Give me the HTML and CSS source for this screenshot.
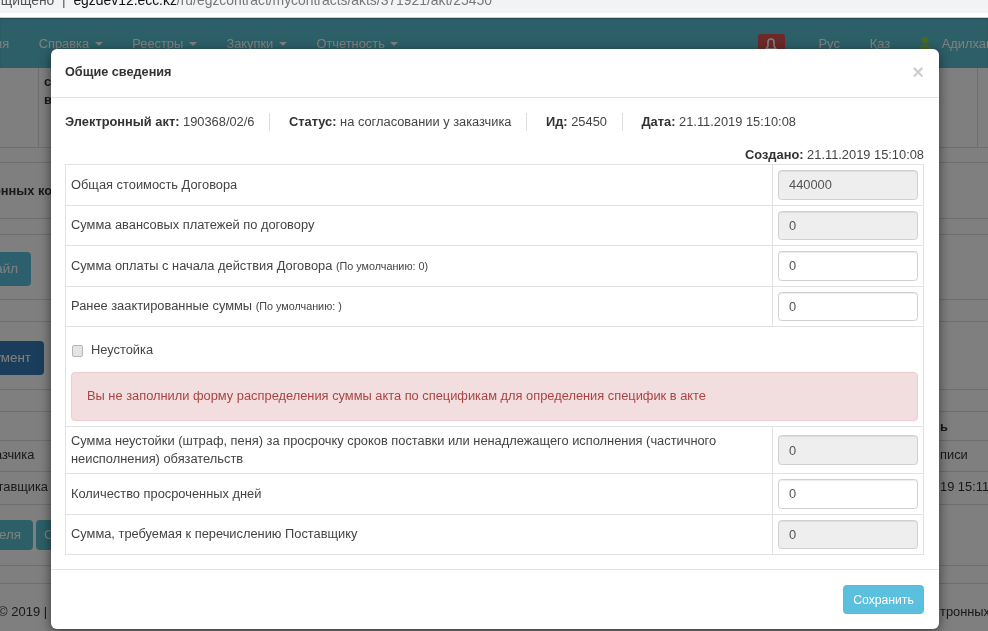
FILE: index.html
```html
<!DOCTYPE html>
<html lang="ru">
<head>
<meta charset="utf-8">
<title>Общие сведения</title>
<link rel="stylesheet" href="styles.css">
</head>
<body>
<div class="shot">
  <div class="addr"><span class="addr-text">ищищено &nbsp;|&nbsp; <b>egzdev12.ecc.kz</b><span class="addr-path">/ru/egzcontract/mycontracts/akts/371921/akt/25450</span></span></div>
  <div class="app">
    <nav class="nav">
      <div class="menu">
        <span class="menu-first">ия</span>
        <span class="menu-item">Справка <i class="caret"></i></span>
        <span class="menu-item">Реестры <i class="caret"></i></span>
        <span class="menu-item">Закупки <i class="caret"></i></span>
        <span class="menu-item">Отчетность <i class="caret"></i></span>
      </div>
      <div class="menu-right">
        <span class="bell"><svg width="12" height="14" viewBox="0 0 12 14"><path d="M6 1a3 3 0 0 1 3 3v4l2 3H1l2-3V4a3 3 0 0 1 3-3z" fill="none" stroke="#fff" stroke-width="1.6"/></svg></span>
        <span class="lang lang-ru">Рус</span>
        <span class="lang">Қаз</span>
        <span class="user"><svg width="14" height="14" viewBox="0 0 14 14"><circle cx="7" cy="4" r="3.4" fill="#8fd14f"/><path d="M1 14c0-4 3-5.500 6-5.500s6 1.500 6 5.500z" fill="#8fd14f"/></svg> Адилхан</span>
      </div>
    </nav>
    <div class="page">
      <div class="row r1"><div class="cell-a"></div><div class="cell-b"><b>с<br>в</b></div><div class="cell-c"></div></div>
      <div class="row r2"></div>
      <div class="row r3"><b class="cut">онных контрактов</b></div>
      <div class="row r4"></div>
      <div class="row r5"><span class="btn btn-teal">Файл</span></div>
      <div class="row r6"></div>
      <div class="row r7"><span class="btn btn-blue">Документ</span></div>
      <div class="row r8"></div>
      <div class="row r9"><b class="right-text">ь</b></div>
      <div class="row r10"><span class="cut2">заказчика</span><span class="right-text">писи</span></div>
      <div class="row r11"><span class="cut3">поставщика</span><span class="right-text">19 15:11</span></div>
      <div class="row r12"><span class="btn btn-teal2">Заявителя</span><span class="btn btn-teal3">С</span></div>
      <div class="row r13"></div>
      <div class="row r14"><span class="copy">© 2019 |</span><span class="right-text">тронных</span></div>
    </div>
    <div class="backdrop"></div>
  </div>

  <section class="modal">
    <header class="modal-head">
      <h4 class="modal-title">Общие сведения</h4>
      <span class="close">×</span>
    </header>
    <div class="modal-body">
      <ul class="info">
        <li><b>Электронный акт:</b> 190368/02/6</li>
        <li><b>Статус:</b> на согласовании у заказчика</li>
        <li><b>Ид:</b> 25450</li>
        <li><b>Дата:</b> 21.11.2019 15:10:08</li>
      </ul>
      <p class="created"><b>Создано:</b> 21.11.2019 15:10:08</p>
      <div class="form">
        <div class="form-row"><div class="label">Общая стоимость Договора</div><div class="control"><input class="field" value="440000" disabled></div></div>
        <div class="form-row"><div class="label">Сумма авансовых платежей по договору</div><div class="control"><input class="field" value="0" disabled></div></div>
        <div class="form-row"><div class="label">Сумма оплаты с начала действия Договора <small>(По умолчанию: 0)</small></div><div class="control"><input class="field" value="0"></div></div>
        <div class="form-row"><div class="label">Ранее заактированные суммы <small>(По умолчанию: )</small></div><div class="control"><input class="field" value="0"></div></div>
        <div class="penalty">
          <label class="check"><input type="checkbox"> <span>Неустойка</span></label>
          <div class="alert">Вы не заполнили форму распределения суммы акта по спецификам для определения специфик в акте</div>
        </div>
        <div class="form-row form-row-tall"><div class="label">Сумма неустойки (штраф, пеня) за просрочку сроков поставки или ненадлежащего исполнения (частичного неисполнения) обязательств</div><div class="control"><input class="field" value="0" disabled></div></div>
        <div class="form-row"><div class="label">Количество просроченных дней</div><div class="control"><input class="field" value="0"></div></div>
        <div class="form-row"><div class="label">Сумма, требуемая к перечислению Поставщику</div><div class="control"><input class="field" value="0" disabled></div></div>
      </div>
    </div>
    <footer class="modal-foot"><button class="save">Сохранить</button></footer>
  </section>
</div>
</body>
</html>
```
FILE: styles.css
```css
* { box-sizing: border-box; }
html, body { margin: 0; padding: 0; background: #fff; }
body { font-family: "Liberation Sans", Arial, sans-serif; font-size: 12.85px; color: #444; }
b, .modal-title { color: #333; }
.shot { position: relative; width: 988px; height: 631px; overflow: hidden; filter: blur(0.5px); }

.addr { height: 18px; background: linear-gradient(#f1f3f4 0 13px, #fff 13px 17px, #c9c9c9 17px); overflow: hidden; }
.addr-text { display: block; margin-top: -8px; margin-left: -7px; font-size: 13.9px; line-height: 16px; color: #555; white-space: nowrap; }
.addr-text b { font-weight: normal; color: #111; }
.addr-path { color: #777; }

.app { position: relative; height: 613px; background: #fff; overflow: hidden; }
.backdrop { position: absolute; inset: 0; background: rgba(0,0,0,.5); }

.nav { height: 50px; background: #5abed0; display: flex; justify-content: space-between; color: #fff; box-shadow: inset 0 1px 2px rgba(0,0,0,.2); }
.menu { display: flex; gap: 29.6px; padding-top: 18px; margin-left: -5px; }
.menu-right { display: flex; align-items: flex-start; padding-top: 16px; margin-right: 7px; }
.caret { display: inline-block; margin-left: 2px; vertical-align: 2px; border-top: 4px solid #fff; border-left: 4px solid transparent; border-right: 4px solid transparent; }
.bell { width: 27px; height: 30px; background: #d9534f; border-radius: 3px; text-align: center; padding-top: 4px; margin-right: 34px; }
.lang { padding-top: 2px; margin-right: 32px; }
.lang-ru { margin-right: 30px; }
.user { padding-top: 2px; white-space: nowrap; margin-right: -12px; margin-left: -4px; }
.user svg { vertical-align: -2px; margin-right: 6px; }

.page { color: #333; }
.row { display: flex; justify-content: space-between; align-items: center; border-bottom: 1px solid #ddd; white-space: nowrap; }
.r1 { height: 80px; align-items: stretch; justify-content: flex-start; }
.cell-a { width: 39px; border-right: 1px solid #ddd; }
.cell-b { padding: 5px 0 0 5px; line-height: 18px; }
.cell-c { width: 11px; margin-left: auto; border-left: 1px solid #ddd; }
.r2 { height: 15px; }
.r3 { height: 56px; }
.r4 { height: 16px; }
.r5 { height: 65px; align-items: flex-start; padding-top: 17px; }
.r6 { height: 22px; }
.r7 { height: 68px; align-items: flex-start; padding-top: 19px; }
.r8 { height: 22px; }
.r9 { height: 29px; }
.r10 { height: 31px; padding-bottom: 4px; }
.r11 { height: 33px; padding-bottom: 4px; }
.r12 { height: 61px; align-items: flex-start; justify-content: flex-start; gap: 3px; padding-top: 15px; }
.r13 { height: 18px; }
.r14 { height: 47px; border-bottom: 0; align-items: flex-start; padding-top: 20px; }
.cut { margin-left: -7px; }
.cut2 { margin-left: -24px; }
.cut3 { margin-left: -23px; }
.right-text { width: 48px; margin-left: auto; }
.copy { margin-left: -2px; font-size: 13px; }
.btn { display: flex; justify-content: flex-end; overflow: hidden; border-radius: 0 4px 4px 0; color: #fff; font-size: 13.4px; }
.btn-teal { width: 31px; height: 34px; line-height: 34px; background: #5bc0de; padding-right: 13px; }
.btn-teal2 { width: 33px; height: 30px; line-height: 30px; background: #5abed0; padding-right: 12px; }
.btn-teal3 { width: 60px; height: 30px; line-height: 30px; background: #5abed0; border-radius: 4px; justify-content: flex-start; padding-left: 8px; }
.btn-blue { width: 44px; height: 34px; line-height: 34px; background: #337ab7; padding-right: 13px; }

.modal { position: absolute; left: 51px; top: 49px; width: 888px; height: 580px; background: #fff; border-radius: 6px; box-shadow: 0 3px 12px rgba(0,0,0,.55); display: flex; flex-direction: column; }
.modal-head { height: 49px; display: flex; justify-content: space-between; align-items: center; padding: 0 15px 2px 14px; border-bottom: 1px solid #e5e5e5; }
.modal-title { margin: 0; font-size: 12.7px; font-weight: bold; }
.close { font-size: 20px; font-weight: bold; color: #cfcfcf; line-height: 1; }
.modal-body { flex: 1; padding: 0 15px 0 14px; border-bottom: 1px solid #e5e5e5; }
.info { list-style: none; display: flex; margin: 15px 0 0; padding: 0; height: 18px; line-height: 18px; }
.info li { padding-right: 15px; margin-right: 18.5px; border-right: 1px solid #ddd; white-space: nowrap; }
.info li:last-child { border: 0; }
.created { margin: 15px 0 0; height: 18px; line-height: 18px; text-align: right; }

.form { width: 859px; border: 1px solid #e2e2e2; border-bottom: 0; line-height: 18px; }
.form-row { display: flex; height: 40.5px; border-bottom: 1px solid #e2e2e2; }
.form-row-tall { height: 47px; }
.label { flex: 1; align-self: center; padding: 0 5px; }
.label small { font-size: 10.8px; }
.control { width: 151px; display: flex; align-items: center; padding: 0 5px; border-left: 1px solid #e2e2e2; }
.field { display: block; width: 100%; height: 29.5px; padding: 0 10px; font: inherit; color: #555; background: #fff; border: 1px solid #d0d0d0; border-radius: 3.6px; box-shadow: inset 0 1px 1px rgba(0,0,0,.075); }
.field:disabled { background: #eee; opacity: 1; -webkit-text-fill-color: #555; }
.penalty { height: 100px; padding: 0 5px; border-bottom: 1px solid #e2e2e2; }
.check { display: flex; align-items: center; gap: 8px; height: 45px; }
.check input { appearance: none; width: 11px; height: 12px; margin: 2px 0 0 1px; background: #e4e4e4; border: 1px solid #b5b5b5; border-radius: 2px; }
.alert { height: 49px; padding: 0 15px; line-height: 46px; color: #a94442; background: #f2dede; border: 1px solid #ebccd1; border-radius: 4px; }
.modal-foot { height: 59px; display: flex; justify-content: flex-end; align-items: flex-start; padding: 15px 15px 0 0; }
.save { width: 81px; height: 29px; padding: 0; font: inherit; font-size: 12.2px; color: #fff; background: #5bc0de; border: 1px solid #55bcdc; border-radius: 3.6px; }
```
